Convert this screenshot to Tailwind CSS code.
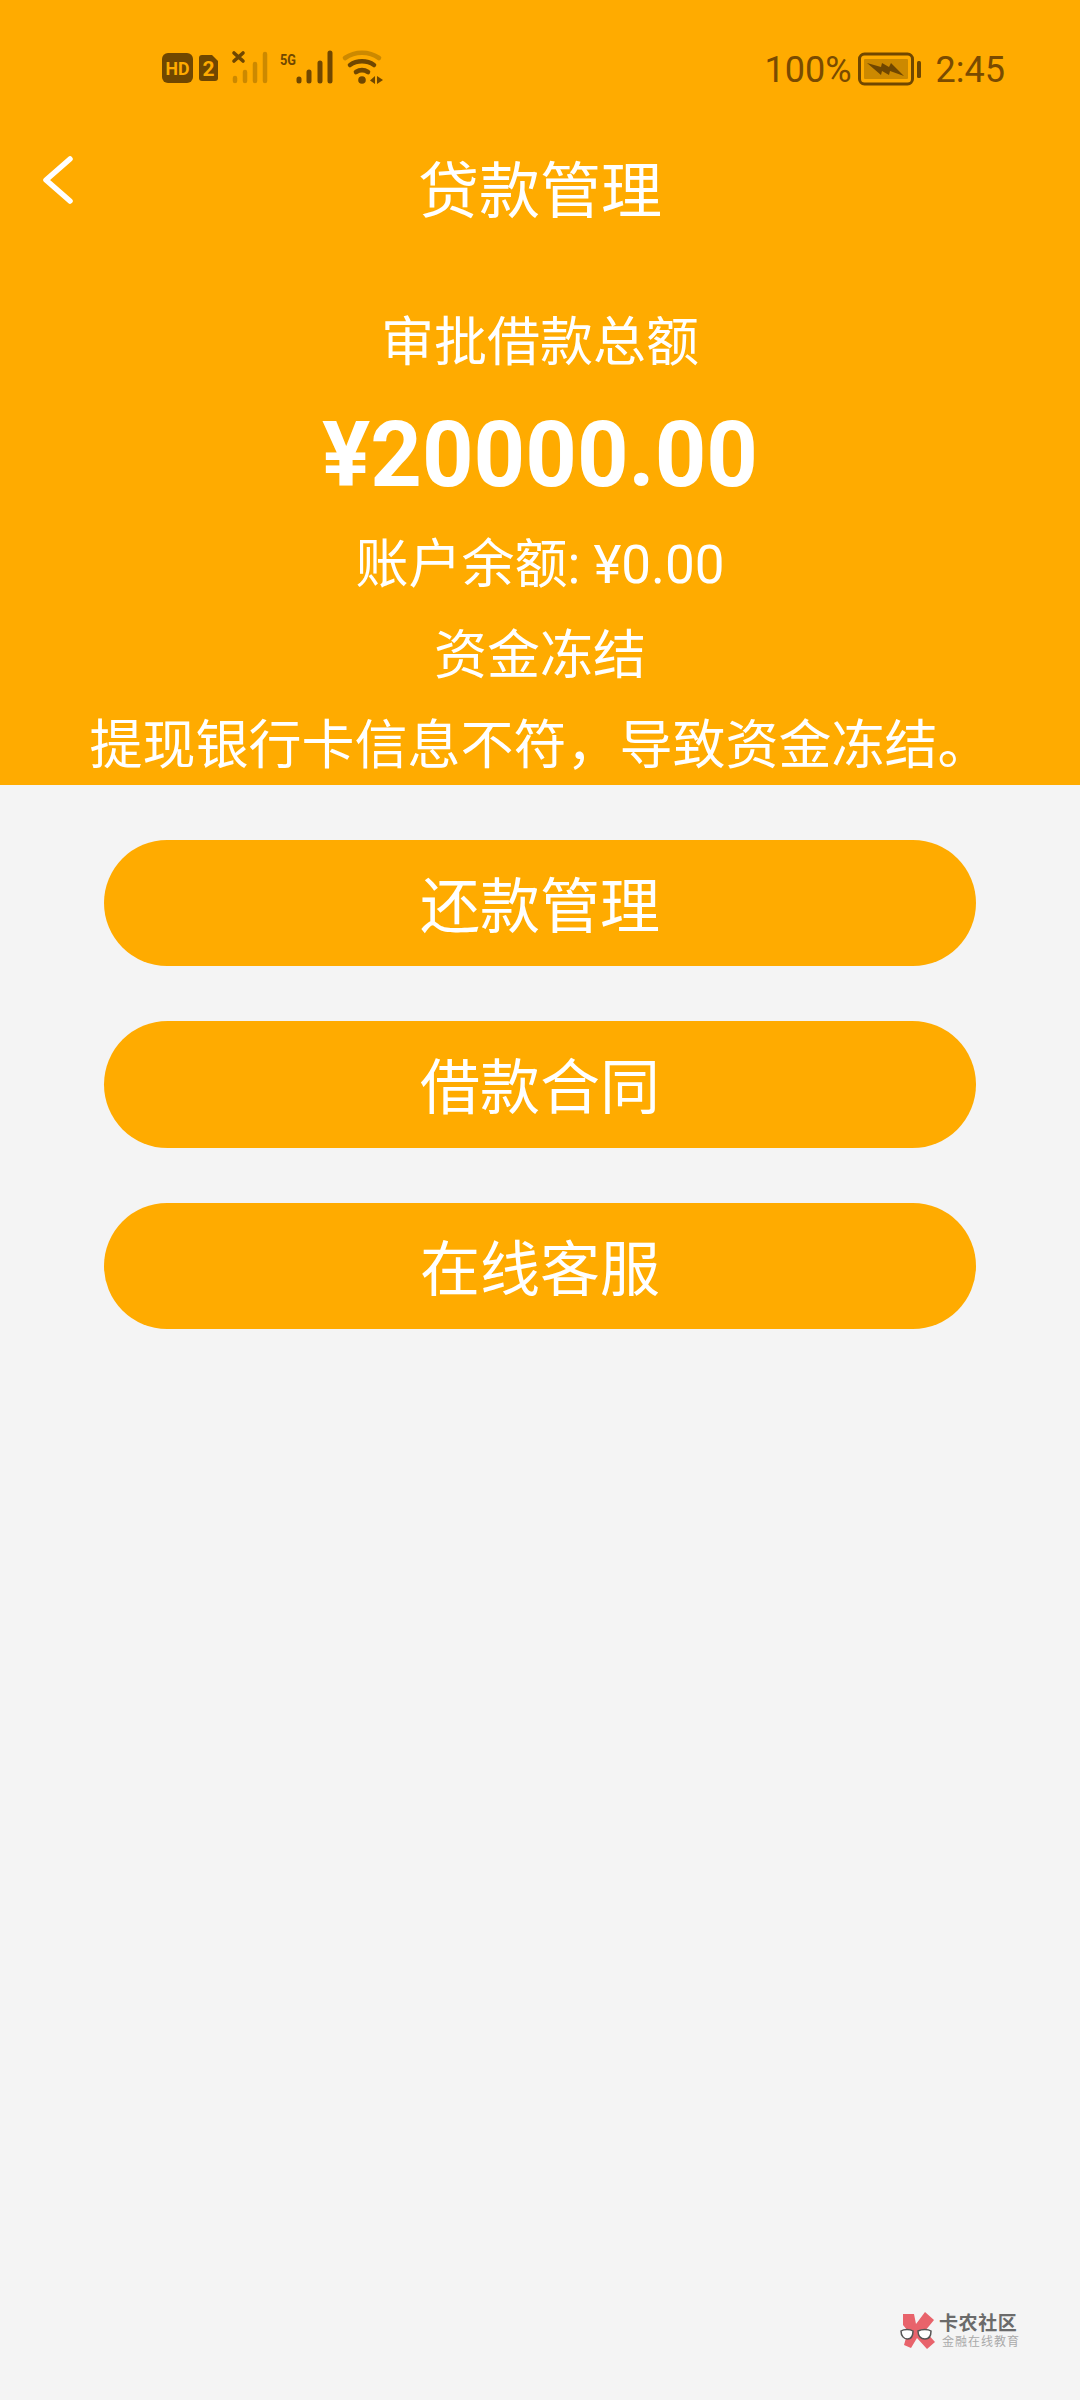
<!DOCTYPE html>
<html lang="zh-CN">
<head>
  <meta charset="UTF-8" />
  <title>贷款管理</title>
  <script src="https://cdn.jsdelivr.net/npm/@tailwindcss/browser@4"></script>
</head>
<body class="w-[1080px] h-[2400px] bg-[#f4f4f4] relative overflow-hidden font-['Roboto','Noto_Sans_CJK_SC',sans-serif]">

  <!-- Header -->
  <header class="h-[785px] bg-[#ffab00] text-white flex flex-col items-center overflow-hidden">
    <!-- Status bar -->
    <div class="w-full h-[136px] shrink-0 flex items-start justify-between pl-[160px] pr-[75px] pt-[45px] text-[#7a4b00]">
      <svg width="225" height="45" viewBox="0 0 225 45">
        <rect x="2" y="8" width="31" height="30" rx="6" fill="#704700"/>
        <text x="17.5" y="29.5" text-anchor="middle" font-size="19" font-weight="700" fill="#ffab00" font-family="Roboto" textLength="24" lengthAdjust="spacingAndGlyphs">HD</text>
        <path d="M39 13a3 3 0 0 1 3-3h10l6 6v17a3 3 0 0 1-3 3H42a3 3 0 0 1-3-3z" fill="#704700"/>
        <text x="48.5" y="30.5" text-anchor="middle" font-size="21" font-weight="700" fill="#ffab00" font-family="Roboto">2</text>
        <path d="M74 8l9 8M83 8l-9 8" stroke="#704700" stroke-width="3.6" stroke-linecap="round"/>
        <path d="M75 36v-3M85 36v-9M95 36v-17M105 36v-27" stroke="#cc8900" stroke-width="4.5" stroke-linecap="round"/>
        <text x="120" y="20" font-size="15" font-weight="700" fill="#704700" font-family="Roboto" textLength="16" lengthAdjust="spacingAndGlyphs">5G</text>
        <path d="M139 36v-2M149 36v-9M160 36v-18M170 36v-28" stroke="#704700" stroke-width="5" stroke-linecap="round"/>
        <path d="M185 13c10-7 24-7 34 0" fill="none" stroke="#cc8900" stroke-width="4.6" stroke-linecap="round"/>
        <path d="M190 20c7-5 17-5 24 0" fill="none" stroke="#704700" stroke-width="4.6" stroke-linecap="round"/>
        <path d="M196 27c4-2.500 8-2.500 12 0" fill="none" stroke="#704700" stroke-width="4.6" stroke-linecap="round"/>
        <circle cx="202" cy="35" r="3.800" fill="#704700"/>
        <path d="M215 31v8l-5-3.500zM217 39v-8l6 4z" fill="#704700"/>
      </svg>
      <div class="flex items-center text-[36px] leading-none h-[45px] pt-[5px]">
        <span>100%</span>
        <svg width="64" height="36" viewBox="0 0 64 36" class="ml-[6px]">
          <rect x="1.500" y="2" width="53" height="30" rx="5" fill="none" stroke="#704700" stroke-width="3"/>
          <rect x="6" y="7" width="44" height="20" rx="1" fill="#cc8900"/>
          <rect x="59" y="9" width="4" height="17" rx="1.500" fill="#704700"/>
          <path d="M9 11l14 4 1-4 7 4 2-4 13 13-14-5-1 4-7-4-1 4z" fill="#704700"/>
        </svg>
        <span class="ml-[14px]">2:45</span>
      </div>
    </div>

    <!-- Title -->
    <div class="w-full relative flex justify-center shrink-0">
      <svg width="34" height="48" viewBox="0 0 34 48" fill="none" class="absolute left-[42px] top-[20px]">
        <path d="M28 3L4 24l24 21" stroke="white" stroke-width="5.500" stroke-linecap="round" stroke-linejoin="round"/>
      </svg>
      <h1 class="text-[61px] leading-[108px] font-normal pt-[2px]">贷款管理</h1>
    </div>

    <p class="text-[53px] leading-[64px] mt-[65px] shrink-0">审批借款总额</p>
    <p class="text-[90px] leading-[100px] font-bold mt-[31px] shrink-0">¥20000.00</p>
    <p class="text-[53px] leading-[64px] mt-[27px] shrink-0">账户余额: ¥0.00</p>
    <p class="text-[53px] leading-[64px] mt-[27px] shrink-0">资金冻结</p>
    <p class="text-[53px] leading-[64px] mt-[26px] whitespace-nowrap shrink-0">提现银行卡信息不符，导致资金冻结。</p>
  </header>

  <!-- Actions -->
  <main class="flex flex-col gap-[55px] px-[104px] pt-[55px]">
    <button class="h-[126px] rounded-full bg-[#ffab00] text-white text-[60px] pt-[9px]">还款管理</button>
    <button class="h-[127px] rounded-full bg-[#ffab00] text-white text-[60px] pt-[9px]">借款合同</button>
    <button class="h-[126px] rounded-full bg-[#ffab00] text-white text-[60px] pt-[9px]">在线客服</button>
  </main>

  <!-- Watermark -->
  <div class="absolute left-[900px] top-[2311px] flex items-start gap-[3px]">
    <svg width="36" height="38" viewBox="0 0 36 38">
      <path d="M3 3h11l2 10 9-12 9 8-9 11 10 11-8 7-10-11-6 10-7-3 4-14-5-6z" fill="#e8636b"/>
      <path d="M1 20c3-2 9-2 12 0 0 5-2 8-5.500 8S1 25 1 20zM18 20c4-2 10-2 13 0 0 5-2 8-6 8s-7-3-7-8z" fill="#fff" stroke="#555" stroke-width="1.500"/>
    </svg>
    <div class="flex flex-col items-start pt-[3px]">
      <span class="text-[19px] leading-[20px] font-bold text-[#6b6b6b] tracking-[0.6px]">卡农社区</span>
      <span class="text-[12px] leading-[13px] text-[#aaa] tracking-[1px] mt-[2px] ml-[3px]">金融在线教育</span>
    </div>
  </div>
</body>
</html>
